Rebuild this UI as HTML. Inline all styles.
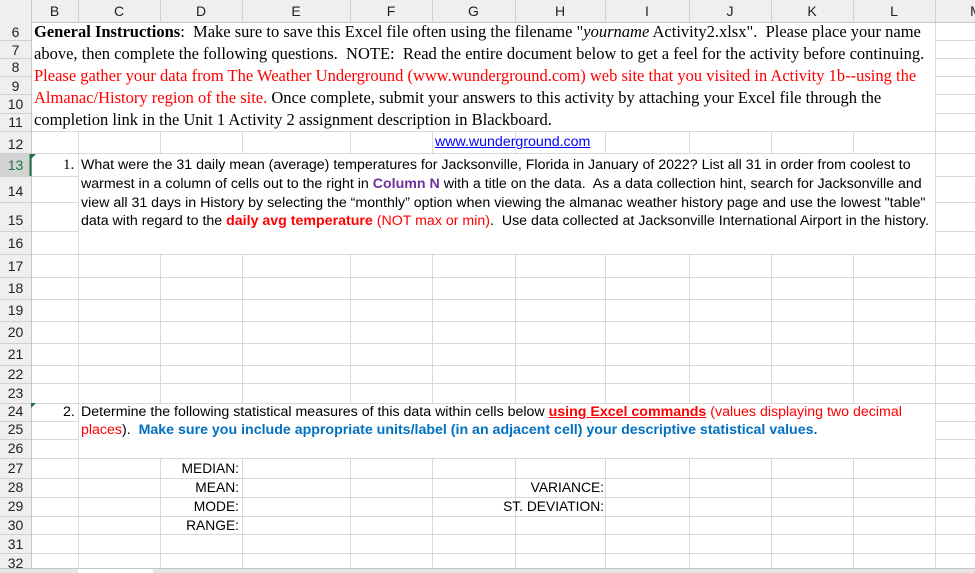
<!DOCTYPE html>
<html><head><meta charset="utf-8"><style>
*{margin:0;padding:0;box-sizing:border-box}
body{width:975px;height:573px;overflow:hidden;background:#fff;position:relative;font-family:"Liberation Sans",Arial,sans-serif}
.a{position:absolute;white-space:nowrap}
.h{position:absolute;font-size:14px;color:#222;text-align:center}
.tm{font-family:"Liberation Serif","Times New Roman",serif;font-size:16.5px;color:#000;left:34px}
.ar{font-size:14.2px;color:#000}
.lb{font-size:13.8px;color:#000}
.red{color:#ff0000}
</style></head><body>
<svg class="a" style="left:0;top:0" width="975" height="573">
<g stroke="#d9d9d9" stroke-width="1" shape-rendering="crispEdges">
<line x1="78.5" y1="22" x2="78.5" y2="573"/><line x1="160.5" y1="22" x2="160.5" y2="573"/><line x1="242.5" y1="22" x2="242.5" y2="573"/><line x1="350.5" y1="22" x2="350.5" y2="573"/><line x1="432.5" y1="22" x2="432.5" y2="573"/><line x1="515.5" y1="22" x2="515.5" y2="573"/><line x1="605.5" y1="22" x2="605.5" y2="573"/><line x1="689.5" y1="22" x2="689.5" y2="573"/><line x1="771.5" y1="22" x2="771.5" y2="573"/><line x1="853.5" y1="22" x2="853.5" y2="573"/><line x1="935.5" y1="22" x2="935.5" y2="573"/>
<line x1="0" y1="40.5" x2="975" y2="40.5"/><line x1="0" y1="58.5" x2="975" y2="58.5"/><line x1="0" y1="76.5" x2="975" y2="76.5"/><line x1="0" y1="94.5" x2="975" y2="94.5"/><line x1="0" y1="113.5" x2="975" y2="113.5"/><line x1="0" y1="131.5" x2="975" y2="131.5"/><line x1="0" y1="153.5" x2="975" y2="153.5"/><line x1="0" y1="176.5" x2="975" y2="176.5"/><line x1="0" y1="202.5" x2="975" y2="202.5"/><line x1="0" y1="231.5" x2="975" y2="231.5"/><line x1="0" y1="254.5" x2="975" y2="254.5"/><line x1="0" y1="277.5" x2="975" y2="277.5"/><line x1="0" y1="299.5" x2="975" y2="299.5"/><line x1="0" y1="321.5" x2="975" y2="321.5"/><line x1="0" y1="343.5" x2="975" y2="343.5"/><line x1="0" y1="365.5" x2="975" y2="365.5"/><line x1="0" y1="383.5" x2="975" y2="383.5"/><line x1="0" y1="403.5" x2="975" y2="403.5"/><line x1="0" y1="421.5" x2="975" y2="421.5"/><line x1="0" y1="439.5" x2="975" y2="439.5"/><line x1="0" y1="458.5" x2="975" y2="458.5"/><line x1="0" y1="478.5" x2="975" y2="478.5"/><line x1="0" y1="497.5" x2="975" y2="497.5"/><line x1="0" y1="516.5" x2="975" y2="516.5"/><line x1="0" y1="534.5" x2="975" y2="534.5"/><line x1="0" y1="553.5" x2="975" y2="553.5"/>
</g>
<rect x="31" y="23" width="904" height="108" fill="#fff"/>
<rect x="79" y="154" width="856" height="100" fill="#fff"/>
<rect x="79" y="404" width="856" height="54" fill="#fff"/>
<rect x="0" y="0" width="975" height="22" fill="#efefef"/>
<line x1="0" y1="22.5" x2="975" y2="22.5" stroke="#c6c6c6"/>
<rect x="0" y="22" width="31" height="551" fill="#efefef"/>
<rect x="0" y="154" width="31" height="22" fill="#d3d3d3"/>
<line x1="31.5" y1="0" x2="31.5" y2="573" stroke="#c6c6c6"/>
<g stroke="#d0d0d0" shape-rendering="crispEdges">
<line x1="78.5" y1="0" x2="78.5" y2="22"/><line x1="160.5" y1="0" x2="160.5" y2="22"/><line x1="242.5" y1="0" x2="242.5" y2="22"/><line x1="350.5" y1="0" x2="350.5" y2="22"/><line x1="432.5" y1="0" x2="432.5" y2="22"/><line x1="515.5" y1="0" x2="515.5" y2="22"/><line x1="605.5" y1="0" x2="605.5" y2="22"/><line x1="689.5" y1="0" x2="689.5" y2="22"/><line x1="771.5" y1="0" x2="771.5" y2="22"/><line x1="853.5" y1="0" x2="853.5" y2="22"/><line x1="935.5" y1="0" x2="935.5" y2="22"/>
<line x1="0" y1="40.5" x2="31" y2="40.5"/><line x1="0" y1="58.5" x2="31" y2="58.5"/><line x1="0" y1="76.5" x2="31" y2="76.5"/><line x1="0" y1="94.5" x2="31" y2="94.5"/><line x1="0" y1="113.5" x2="31" y2="113.5"/><line x1="0" y1="131.5" x2="31" y2="131.5"/><line x1="0" y1="153.5" x2="31" y2="153.5"/><line x1="0" y1="176.5" x2="31" y2="176.5"/><line x1="0" y1="202.5" x2="31" y2="202.5"/><line x1="0" y1="231.5" x2="31" y2="231.5"/><line x1="0" y1="254.5" x2="31" y2="254.5"/><line x1="0" y1="277.5" x2="31" y2="277.5"/><line x1="0" y1="299.5" x2="31" y2="299.5"/><line x1="0" y1="321.5" x2="31" y2="321.5"/><line x1="0" y1="343.5" x2="31" y2="343.5"/><line x1="0" y1="365.5" x2="31" y2="365.5"/><line x1="0" y1="383.5" x2="31" y2="383.5"/><line x1="0" y1="403.5" x2="31" y2="403.5"/><line x1="0" y1="421.5" x2="31" y2="421.5"/><line x1="0" y1="439.5" x2="31" y2="439.5"/><line x1="0" y1="458.5" x2="31" y2="458.5"/><line x1="0" y1="478.5" x2="31" y2="478.5"/><line x1="0" y1="497.5" x2="31" y2="497.5"/><line x1="0" y1="516.5" x2="31" y2="516.5"/><line x1="0" y1="534.5" x2="31" y2="534.5"/><line x1="0" y1="553.5" x2="31" y2="553.5"/>
</g>
<line x1="30.5" y1="154" x2="30.5" y2="176" stroke="#217346" stroke-width="2"/>
<polygon points="31,154 36,154 31,159" fill="#217346"/>
<polygon points="31,403 36,403 31,408" fill="#217346"/>
<rect x="0" y="569" width="975" height="4" fill="#e6e6e6"/>
<rect x="78" y="569" width="75" height="4" fill="#fff"/>
<line x1="0" y1="568.5" x2="975" y2="568.5" stroke="#c6c6c6"/>
</svg>
<div class="h" style="left:31px;top:3px;width:47px">B</div><div class="h" style="left:78px;top:3px;width:82px">C</div><div class="h" style="left:160px;top:3px;width:82px">D</div><div class="h" style="left:242px;top:3px;width:108px">E</div><div class="h" style="left:350px;top:3px;width:82px">F</div><div class="h" style="left:432px;top:3px;width:83px">G</div><div class="h" style="left:515px;top:3px;width:90px">H</div><div class="h" style="left:605px;top:3px;width:84px">I</div><div class="h" style="left:689px;top:3px;width:82px">J</div><div class="h" style="left:771px;top:3px;width:82px">K</div><div class="h" style="left:853px;top:3px;width:82px">L</div><div class="h" style="left:935px;top:3px;width:82px">M</div>
<div class="h" style="left:0;width:31px;top:24px">6</div><div class="h" style="left:0;width:31px;top:42px">7</div><div class="h" style="left:0;width:31px;top:59px">8</div><div class="h" style="left:0;width:31px;top:78px">9</div><div class="h" style="left:0;width:31px;top:96px">10</div><div class="h" style="left:0;width:31px;top:114px">11</div><div class="h" style="left:0;width:31px;top:136px">12</div><div class="h" style="left:0;width:31px;top:157px;color:#217346">13</div><div class="h" style="left:0;width:31px;top:183px">14</div><div class="h" style="left:0;width:31px;top:212px">15</div><div class="h" style="left:0;width:31px;top:235px">16</div><div class="h" style="left:0;width:31px;top:258px">17</div><div class="h" style="left:0;width:31px;top:280px">18</div><div class="h" style="left:0;width:31px;top:302px">19</div><div class="h" style="left:0;width:31px;top:324px">20</div><div class="h" style="left:0;width:31px;top:346px">21</div><div class="h" style="left:0;width:31px;top:366px">22</div><div class="h" style="left:0;width:31px;top:385px">23</div><div class="h" style="left:0;width:31px;top:403px">24</div><div class="h" style="left:0;width:31px;top:421px">25</div><div class="h" style="left:0;width:31px;top:440px">26</div><div class="h" style="left:0;width:31px;top:460px">27</div><div class="h" style="left:0;width:31px;top:479px">28</div><div class="h" style="left:0;width:31px;top:498px">29</div><div class="h" style="left:0;width:31px;top:517px">30</div><div class="h" style="left:0;width:31px;top:536px">31</div><div class="h" style="left:0;width:31px;top:555px">32</div>

<div class="a tm" style="top:22px"><b>General Instructions</b>:&nbsp; Make sure to save this Excel file often using the filename "<i>yourname</i> Activity2.xlsx".&nbsp; Please place your name</div>
<div class="a tm" style="top:44px">above, then complete the following questions.&nbsp; NOTE:&nbsp; Read the entire document below to get a feel for the activity before continuing.</div>
<div class="a tm red" style="top:66px">Please gather your data from The Weather Underground (www.wunderground.com) web site that you visited in Activity 1b--using the</div>
<div class="a tm" style="top:88px"><span class="red">Almanac/History region of the site.</span> Once complete, submit your answers to this activity by attaching your Excel file through the</div>
<div class="a tm" style="top:110px">completion link in the Unit 1 Activity 2 assignment description in Blackboard.</div>

<div class="a ar" style="left:435px;top:134px;color:#0000ff;text-decoration:underline">www.wunderground.com</div>

<div class="a" style="left:63px;top:157px;font-family:'Liberation Serif',serif;font-size:15px">1.</div>
<div class="a ar" style="left:81px;top:157px">What were the 31 daily mean (average) temperatures for Jacksonville, Florida in January of 2022? List all 31 in order from coolest to</div>
<div class="a ar" style="left:81px;top:176px">warmest in a column of cells out to the right in <b style="color:#7030a0">Column N</b> with a title on the data.&nbsp; As a data collection hint, search for Jacksonville and</div>
<div class="a ar" style="left:81px;top:195px">view all 31 days in History by selecting the “monthly” option when viewing the almanac weather history page and use the lowest "table"</div>
<div class="a ar" style="left:81px;top:213px">data with regard to the <b class="red">daily avg temperature</b> <span class="red">(NOT max or min)</span>.&nbsp; Use data collected at Jacksonville International Airport in the history.</div>

<div class="a ar" style="left:63px;top:404px">2.</div>
<div class="a ar" style="left:81px;top:404px">Determine the following statistical measures of this data within cells below <b class="red" style="text-decoration:underline">using Excel commands</b> <span class="red">(values displaying two decimal</span></div>
<div class="a ar" style="left:81px;top:422px"><span class="red">places</span>).&nbsp; <b style="color:#0070c0">Make sure you include appropriate units/label (in an adjacent cell) your descriptive statistical values.</b></div>

<div class="a lb" style="right:736px;top:461px">MEDIAN:</div>
<div class="a lb" style="right:736px;top:480px">MEAN:</div>
<div class="a lb" style="right:736px;top:499px">MODE:</div>
<div class="a lb" style="right:736px;top:518px">RANGE:</div>
<div class="a lb" style="right:371px;top:480px">VARIANCE:</div>
<div class="a lb" style="right:371px;top:499px">ST. DEVIATION:</div>
</body></html>
